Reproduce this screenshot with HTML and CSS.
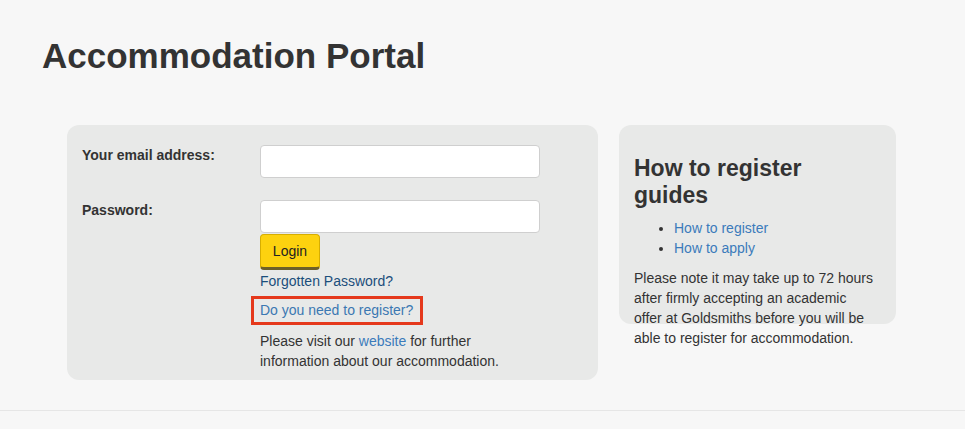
FILE: index.html
```html
<!DOCTYPE html>
<html lang="en">
<head>
<meta charset="utf-8">
<title>Accommodation Portal</title>
<link rel="stylesheet" href="styles.css">
</head>
<body>
<header class="page-header">
  <h1 class="title">Accommodation Portal</h1>
</header>
<main class="content">
  <section class="login-panel">
    <form class="login-form">
      <div class="form-row">
        <label class="field-label" for="email">Your email address:</label>
        <div class="field-control"><input class="text-input" id="email" type="text"></div>
      </div>
      <div class="form-row form-row-last">
        <label class="field-label" for="password">Password:</label>
        <div class="field-control">
          <input class="text-input" id="password" type="password">
          <button class="login-btn" type="button">Login</button>
          <a class="forgot-link" href="#">Forgotten Password?</a>
          <a class="register-link" href="#">Do you need to register?</a>
          <p class="visit-text">Please visit our <a class="inline-link" href="#">website</a> for further information about our accommodation.</p>
        </div>
      </div>
    </form>
  </section>
  <aside class="guide-panel">
    <h2 class="guide-title">How to register guides</h2>
    <ul class="guide-list">
      <li><a class="inline-link" href="#">How to register</a></li>
      <li><a class="inline-link" href="#">How to apply</a></li>
    </ul>
    <p class="guide-note">Please note it may take up to 72 hours after firmly accepting an academic offer at Goldsmiths before you will be able to register for accommodation.</p>
  </aside>
</main>
<footer class="page-footer"></footer>
</body>
</html>
```

FILE: styles.css
```css
html, body {
  margin: 0;
  padding: 0;
  background: #f7f7f7;
  color: #333333;
  font-family: "Liberation Sans", Arial, Helvetica, sans-serif;
  font-size: 14px;
  line-height: 20px;
}

.page-header {
  padding: 36px 0 0 42px;
}

.title {
  margin: 0;
  font-size: 35px;
  line-height: 40px;
  font-weight: bold;
  color: #333333;
}

.content {
  display: flex;
  align-items: flex-start;
  gap: 21px;
  margin-top: 49px;
  padding-left: 67px;
}

.login-panel {
  width: 531px;
  height: 255px;
  box-sizing: border-box;
  background: #e8e9e8;
  border-radius: 12px;
  padding: 20px 15px 0 15px;
}

.login-form {
  display: flex;
  flex-direction: column;
  gap: 22px;
}

.form-row {
  display: flex;
}

.field-label {
  width: 178px;
  flex: none;
  font-weight: bold;
  font-size: 14px;
  line-height: 20px;
  color: #333333;
}

.field-control {
  display: flex;
  flex-direction: column;
  align-items: flex-start;
}

.text-input {
  width: 280px;
  height: 33px;
  box-sizing: border-box;
  margin: 0;
  border: 1px solid #cfcfcf;
  border-radius: 4px;
  background: #ffffff;
  font: inherit;
}

.login-btn {
  margin: 1px 0 1px 0;
  width: 60px;
  height: 36px;
  box-sizing: border-box;
  background: #fdd20f;
  border: 1px solid #d7ae00;
  border-bottom: 3px solid #6d6028;
  border-radius: 4px;
  font-family: "Liberation Sans", Arial, sans-serif;
  font-size: 14px;
  color: #222222;
  padding: 0;
}

.forgot-link {
  color: #1b4e7b;
  text-decoration: none;
  font-size: 14px;
  line-height: 20px;
}

.register-link {
  display: inline-block;
  margin: 5px 0 0 -9px;
  padding: 1px 7px 2px 6px;
  border: 3px solid #e5391c;
  color: #3b78b2;
  text-decoration: none;
  line-height: 20px;
}

.visit-text {
  margin: 6px 0 0 0;
  width: 260px;
}

.inline-link {
  color: #3b7bbb;
  text-decoration: none;
}

.guide-panel {
  width: 277px;
  height: 199px;
  box-sizing: border-box;
  background: #e8e9e8;
  border-radius: 12px;
  padding: 30px 15px 0 15px;
  overflow: visible;
}

.guide-title {
  margin: 0;
  font-size: 23px;
  line-height: 27px;
  font-weight: bold;
  color: #333333;
}

.guide-list {
  margin: 9px 0 0 0;
  padding-left: 40px;
}

.guide-note {
  margin: 10px 0 0 0;
  width: 242px;
}

.page-footer {
  margin-top: 30px;
  border-top: 1px solid #e6e6e6;
  height: 18px;
}
```
